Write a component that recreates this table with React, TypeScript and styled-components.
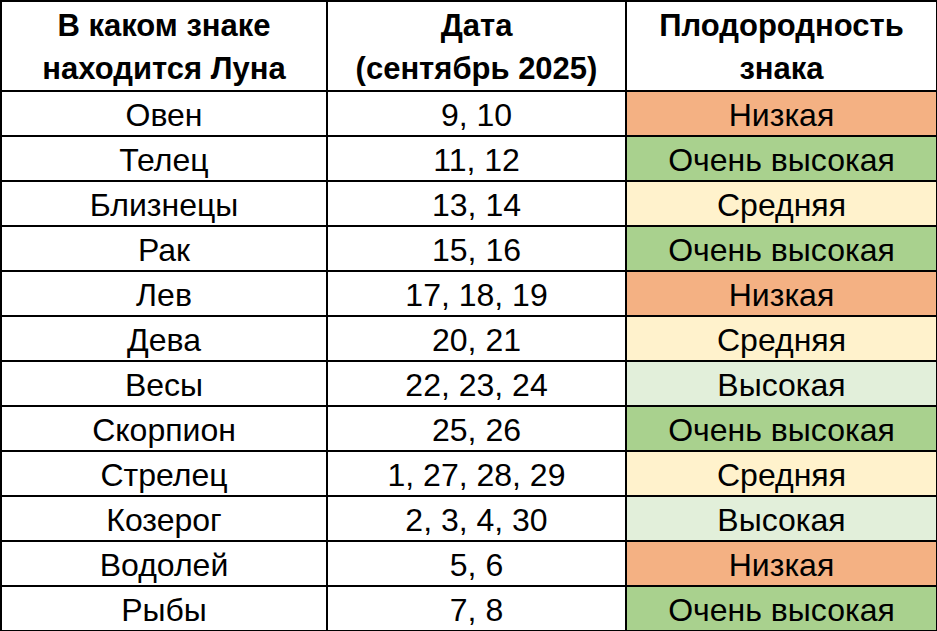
import React from 'react';
import styled, { createGlobalStyle } from 'styled-components';

type Level = 'low' | 'mid' | 'high' | 'top';

interface Row {
  sign: string;
  dates: string;
  level: Level;
}

const LABELS: Record<Level, string> = {
  low: 'Низкая',
  mid: 'Средняя',
  high: 'Высокая',
  top: 'Очень высокая',
};

const COLORS: Record<Level, string> = {
  low: '#f4b183',
  mid: '#fff2cc',
  high: '#e2efda',
  top: '#a9d18e',
};

const rows: Row[] = [
  { sign: 'Овен', dates: '9, 10', level: 'low' },
  { sign: 'Телец', dates: '11, 12', level: 'top' },
  { sign: 'Близнецы', dates: '13, 14', level: 'mid' },
  { sign: 'Рак', dates: '15, 16', level: 'top' },
  { sign: 'Лев', dates: '17, 18, 19', level: 'low' },
  { sign: 'Дева', dates: '20, 21', level: 'mid' },
  { sign: 'Весы', dates: '22, 23, 24', level: 'high' },
  { sign: 'Скорпион', dates: '25, 26', level: 'top' },
  { sign: 'Стрелец', dates: '1, 27, 28, 29', level: 'mid' },
  { sign: 'Козерог', dates: '2, 3, 4, 30', level: 'high' },
  { sign: 'Водолей', dates: '5, 6', level: 'low' },
  { sign: 'Рыбы', dates: '7, 8', level: 'top' },
];

const GlobalStyle = createGlobalStyle`
  body {
    margin: 0;
    background: #fff;
    font-family: "Liberation Sans", Arial, sans-serif;
    color: #000;
  }
`;

const Table = styled.table`
  border-collapse: collapse;
  width: 936px;
  table-layout: fixed;
`;

const HeadCell = styled.th`
  height: 85px;
  border: 2px solid #000;
  padding: 2px 0 0;
  font-size: 31px;
  font-weight: bold;
  line-height: 43px;
  text-align: center;
  vertical-align: middle;
`;

const Cell = styled.td<{ $bg?: string }>`
  height: 39px;
  border: 2px solid #000;
  padding: 4px 0 0;
  font-size: 32px;
  line-height: 39px;
  text-align: center;
  vertical-align: middle;
  background: ${(p) => p.$bg || '#fff'};
`;

const App: React.FC = () => {
  return (
    <>
      <GlobalStyle />
      <Table>
        <colgroup>
          <col style={{ width: 326 }} />
          <col style={{ width: 299 }} />
          <col style={{ width: 311 }} />
        </colgroup>
        <thead>
          <tr>
            <HeadCell>
              В каком знаке
              <br />
              находится Луна
            </HeadCell>
            <HeadCell>
              Дата
              <br />
              (сентябрь 2025)
            </HeadCell>
            <HeadCell>
              Плодородность
              <br />
              знака
            </HeadCell>
          </tr>
        </thead>
        <tbody>
          {rows.map((r) => (
            <tr key={r.sign}>
              <Cell>{r.sign}</Cell>
              <Cell>{r.dates}</Cell>
              <Cell $bg={COLORS[r.level]}>{LABELS[r.level]}</Cell>
            </tr>
          ))}
        </tbody>
      </Table>
    </>
  );
};

export default App;
